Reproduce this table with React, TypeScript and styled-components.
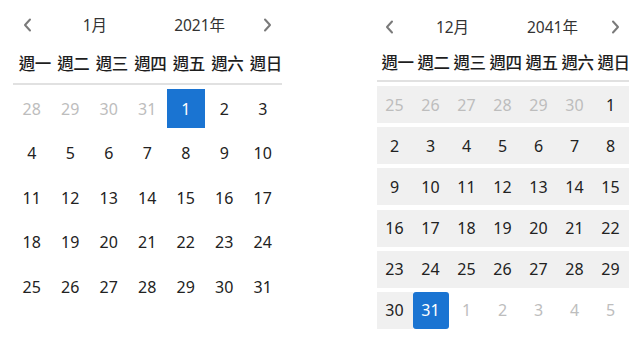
import React from "react";
import styled, { createGlobalStyle } from "styled-components";

const GlobalStyle = createGlobalStyle`
  html, body {
    margin: 0;
    padding: 0;
    background: #ffffff;
  }
  body {
    font-family: "Noto Sans", "Noto Sans CJK TC", sans-serif;
    color: #222;
  }
`;

type Size = "roomy" | "compact";

interface Metrics {
  col: number;
  row: number;
  gap: number;
  top: number;
  chevronPad: number;
  weekPad: number;
  gridTop: number;
}

const metrics: Record<Size, Metrics> = {
  roomy: { col: 38.5, row: 39, gap: 5.5, top: 8, chevronPad: 15, weekPad: 8, gridTop: 4 },
  compact: { col: 36, row: 37, gap: 4.2, top: 10, chevronPad: 13, weekPad: 6, gridTop: 4 },
};

const Page = styled.div`
  display: flex;
  align-items: flex-start;
  padding-left: 12.5px;
  gap: 94.5px;
`;

const Calendar = styled.div<{ $size: Size }>`
  display: flex;
  flex-direction: column;
  width: ${(p) => metrics[p.$size].col * 7}px;
  padding-top: ${(p) => metrics[p.$size].top}px;
`;

const Header = styled.div`
  display: flex;
  align-items: center;
  height: 34px;
`;

const NavButton = styled.button<{ $size: Size }>`
  display: flex;
  align-items: center;
  justify-content: center;
  width: ${(p) => metrics[p.$size].chevronPad * 2}px;
  height: 34px;
  padding: 0;
  border: none;
  background: transparent;
  cursor: pointer;
`;

const HeaderLabel = styled.div`
  flex: 1;
  text-align: center;
  font-family: "Noto Sans", "Noto Sans CJK TC", sans-serif;
  font-size: 15.5px;
  color: #333;
  line-height: 34px;
`;

const WeekRow = styled.div<{ $size: Size }>`
  display: grid;
  grid-template-columns: repeat(7, ${(p) => metrics[p.$size].col}px);
  margin-top: ${(p) => (p.$size === "roomy" ? 9 : 6)}px;
  padding-left: 3px;
  padding-bottom: ${(p) => metrics[p.$size].weekPad}px;
  border-bottom: 2px solid #e1e1e1;
`;

const WeekLabel = styled.div`
  text-align: center;
  font-family: "Noto Sans CJK TC", "Noto Sans CJK SC", sans-serif;
  font-weight: 500;
  font-size: 16.5px;
  line-height: 24px;
  color: #1e1e1e;
  white-space: nowrap;
  letter-spacing: -0.4px;
`;

const DayGrid = styled.div<{ $size: Size }>`
  display: grid;
  grid-template-columns: repeat(7, ${(p) => metrics[p.$size].col}px);
  grid-auto-rows: ${(p) => metrics[p.$size].row}px;
  row-gap: ${(p) => metrics[p.$size].gap}px;
  margin-top: ${(p) => metrics[p.$size].gridTop}px;
`;

const DayCell = styled.div<{ $muted: boolean; $selected: boolean; $shaded: boolean; $rounded: boolean }>`
  display: flex;
  align-items: center;
  justify-content: center;
  font-family: "Noto Sans", sans-serif;
  font-size: 16px;
  color: ${(p) => (p.$selected ? "#ffffff" : p.$muted ? "#bdbdbd" : "#222222")};
  background: ${(p) => (p.$selected ? "#1a74d2" : p.$shaded ? "#f0f0f0" : "transparent")};
  border-radius: ${(p) => (p.$selected && p.$rounded ? "3px" : "0")};
`;

const Chevron = ({ dir }: { dir: "left" | "right" }) => (
  <svg width="9" height="14" viewBox="0 0 9 14" fill="none">
    <polyline
      points={dir === "left" ? "7,1.5 2,7 7,12.5" : "2,1.5 7,7 2,12.5"}
      stroke="#7a7a7a"
      strokeWidth="2"
      strokeLinecap="round"
      strokeLinejoin="round"
    />
  </svg>
);

const WEEKDAYS = ["週一", "週二", "週三", "週四", "週五", "週六", "週日"];

interface Day {
  date: number;
  inMonth: boolean;
  key: string;
  stamp: number;
}

function buildMonth(year: number, month: number, weeks: number): Day[] {
  const first = new Date(year, month - 1, 1);
  const offset = (first.getDay() + 6) % 7;
  const start = new Date(year, month - 1, 1 - offset);
  const days: Day[] = [];
  for (let i = 0; i < weeks * 7; i++) {
    const d = new Date(start.getFullYear(), start.getMonth(), start.getDate() + i);
    days.push({
      date: d.getDate(),
      inMonth: d.getMonth() === month - 1,
      key: `${d.getFullYear()}-${d.getMonth()}-${d.getDate()}`,
      stamp: d.getTime(),
    });
  }
  return days;
}

interface CalendarProps {
  year: number;
  month: number;
  selected: number;
  weeks: number;
  size: Size;
  shadeBefore?: boolean;
}

const MonthCalendar = ({ year, month, selected, weeks, size, shadeBefore }: CalendarProps) => {
  const days = buildMonth(year, month, weeks);
  const selectedStamp = new Date(year, month - 1, selected).getTime();
  return (
    <Calendar $size={size}>
      <Header>
        <NavButton $size={size} aria-label="上個月">
          <Chevron dir="left" />
        </NavButton>
        <HeaderLabel>{month}月</HeaderLabel>
        <HeaderLabel>{year}年</HeaderLabel>
        <NavButton $size={size} aria-label="下個月">
          <Chevron dir="right" />
        </NavButton>
      </Header>
      <WeekRow $size={size}>
        {WEEKDAYS.map((w) => (
          <WeekLabel key={w}>{w}</WeekLabel>
        ))}
      </WeekRow>
      <DayGrid $size={size}>
        {days.map((d) => (
          <DayCell
            key={d.key}
            $muted={!d.inMonth}
            $selected={d.stamp === selectedStamp}
            $shaded={!!shadeBefore && d.stamp < selectedStamp}
            $rounded={size === "compact"}
          >
            {d.date}
          </DayCell>
        ))}
      </DayGrid>
    </Calendar>
  );
};

export default function App() {
  return (
    <>
      <GlobalStyle />
      <Page>
        <MonthCalendar year={2021} month={1} selected={1} weeks={5} size="roomy" />
        <MonthCalendar year={2041} month={12} selected={31} weeks={6} size="compact" shadeBefore />
      </Page>
    </>
  );
}
